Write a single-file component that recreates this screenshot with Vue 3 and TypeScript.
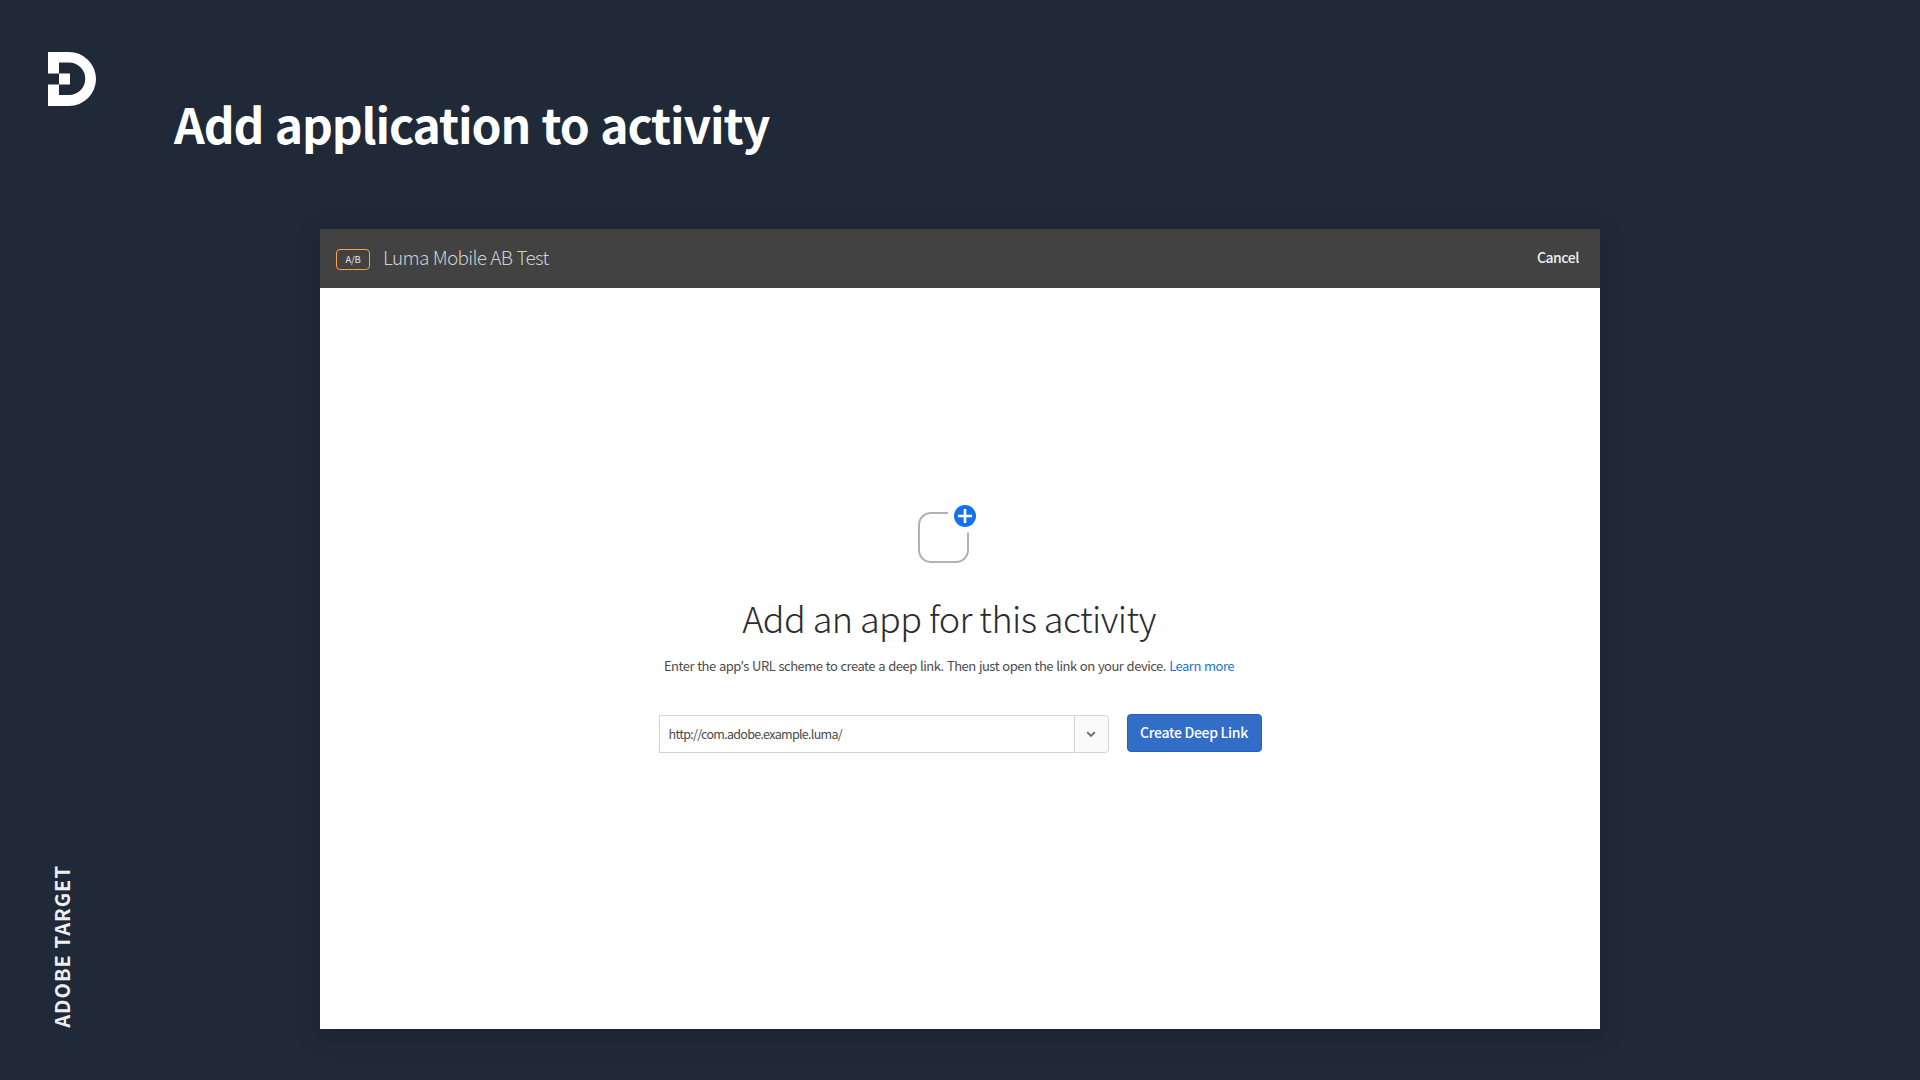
<template>
  <div class="slide">
    <aside class="rail">
      <svg class="logo" width="48" height="54" viewBox="0 0 48 54">
        <path d="M0 0H21A27 27 0 0 1 21 54H0V32.5H11V43H21A16 16 0 0 0 21 10.5H11V21.5H0Z" fill="#fff" />
        <rect x="11" y="21.5" width="11" height="11" fill="#fff" />
      </svg>
      <div class="product">{{ product }}</div>
    </aside>

    <main class="content">
      <h1 class="title">{{ title }}</h1>

      <section class="panel">
        <header class="panel-header">
          <span class="badge">A/B</span>
          <span class="activity-name">{{ activityName }}</span>
          <button class="cancel">Cancel</button>
        </header>

        <div class="panel-body">
          <svg class="app-icon" width="60" height="62" viewBox="0 0 60 62">
            <path
              d="M31 10H14A12 12 0 0 0 2 22V47A12 12 0 0 0 14 59H39A12 12 0 0 0 51 47V29.5"
              fill="none"
              stroke="#b1b1b1"
              stroke-width="2"
            />
            <circle cx="48" cy="13" r="11" fill="#1473e6" />
            <path d="M41 13H55M48 6V20" stroke="#fff" stroke-width="2.6" />
          </svg>

          <h2 class="heading">Add an app for this activity</h2>
          <p class="hint">
            Enter the app's URL scheme to create a deep link. Then just open the link on your device.
            <a class="learn-more">Learn more</a>
          </p>

          <div class="form-row">
            <div class="combo">
              <input v-model="url" class="combo-input" type="text" spellcheck="false" />
              <button class="combo-toggle">
                <svg width="10" height="7" viewBox="0 0 10 7">
                  <path d="M1.2 1.2L5 5L8.8 1.2" fill="none" stroke="#6a6a6a" stroke-width="1.8" />
                </svg>
              </button>
            </div>
            <button class="create">Create Deep Link</button>
          </div>
        </div>
      </section>
    </main>
  </div>
</template>

<script setup lang="ts">
import { ref } from 'vue';

const product = 'ADOBE TARGET';
const title = 'Add application to activity';
const activityName = 'Luma Mobile AB Test';
const url = ref<string>('http://com.adobe.example.luma/');
</script>

<style>
body {
  margin: 0;
  overflow: hidden;
}
</style>

<style scoped>
.slide {
  display: flex;
  width: 1920px;
  height: 1080px;
  overflow: hidden;
  background: #202937;
  font-family: "Noto Sans CJK SC", "Noto Sans", sans-serif;
}

.slide * {
  box-sizing: border-box;
}

button,
input {
  margin: 0;
  font-family: inherit;
}

.rail {
  display: flex;
  flex-direction: column;
  justify-content: space-between;
  width: 174px;
  padding: 52px 0 52px 48px;
}

.product {
  width: 28px;
  line-height: 28px;
  writing-mode: vertical-rl;
  transform: rotate(180deg);
  color: #eee;
  font-size: 20px;
  font-weight: 700;
  letter-spacing: 1.05px;
  white-space: nowrap;
}

.content {
  flex: 1;
  padding-top: 93px;
}

.title {
  margin: 0;
  color: #fff;
  font-size: 48px;
  font-weight: 700;
  letter-spacing: -1.12px;
  line-height: 60px;
  white-space: nowrap;
  word-spacing: 1.7px;
}

.panel {
  width: 1280px;
  height: 800px;
  margin: 76px 0 0 146px;
  background: #fff;
  box-shadow: 0 6px 24px rgba(0, 0, 0, 0.18);
}

.panel-header {
  display: flex;
  align-items: center;
  height: 59px;
  padding: 0 21px 0 16px;
  background: #424242;
}

.badge {
  width: 34px;
  height: 21px;
  margin-top: 2px;
  border: 1px solid #ff9f4a;
  border-radius: 4px;
  color: #e4e4e4;
  font-size: 9.5px;
  letter-spacing: -0.2px;
  line-height: 19px;
  text-align: center;
}

.activity-name {
  margin: -3px 0 0 13px;
  color: #d0d0d0;
  font-size: 19px;
  font-weight: 300;
  letter-spacing: -0.73px;
  line-height: 28px;
  word-spacing: 0.7px;
}

.cancel {
  margin: -4px 0 0 auto;
  padding: 0;
  border: none;
  background: none;
  color: #eee;
  font-size: 14px;
  font-weight: 500;
  letter-spacing: -0.45px;
  line-height: 20px;
}

.panel-body {
  display: flex;
  flex-direction: column;
  align-items: center;
  padding-top: 215px;
}

.app-icon {
  margin-right: 26px;
}

.heading {
  margin: 27px 22px 0 0;
  color: #2c2c2c;
  font-size: 36px;
  font-weight: 300;
  letter-spacing: -0.56px;
  line-height: 50px;
  white-space: nowrap;
}

.hint {
  margin: 14px 22px 0 0;
  color: #4b4b4b;
  font-size: 13px;
  letter-spacing: -0.5px;
  line-height: 20px;
  white-space: nowrap;
  word-spacing: 0.8px;
}

.learn-more {
  color: #1473e6;
}

.form-row {
  display: flex;
  align-items: flex-start;
  width: 603px;
  margin-top: 38px;
}

.combo {
  display: flex;
  width: 450px;
  height: 38px;
  margin-top: 1px;
}

.combo-input {
  flex: 1;
  min-width: 0;
  padding: 0 9px 1px;
  border: 1px solid #d3d3d3;
  border-right: none;
  outline: none;
  color: #4b4b4b;
  font-size: 12.5px;
  letter-spacing: -0.69px;
}

.combo-toggle {
  display: flex;
  align-items: center;
  justify-content: center;
  width: 35px;
  padding: 0;
  border: 1px solid #d3d3d3;
  border-radius: 0 4px 4px 0;
  background: #fafafa;
}

.create {
  width: 135px;
  height: 38px;
  margin-left: 18px;
  padding: 0 0 2px;
  border: 1px solid #2261bd;
  border-radius: 4px;
  background: #326ec8;
  color: #fff;
  font-size: 14px;
  font-weight: 500;
  letter-spacing: -0.3px;
  line-height: 34px;
  white-space: nowrap;
}
</style>
